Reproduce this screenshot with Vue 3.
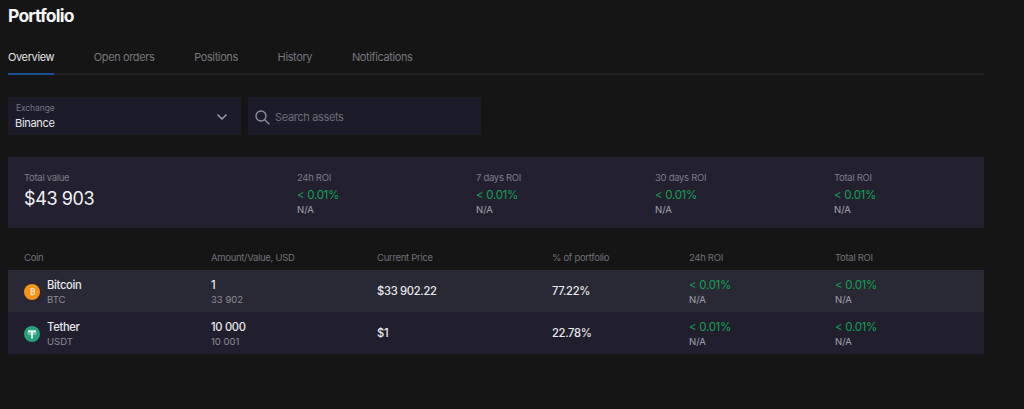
<template>
  <div class="page">
    <h1 class="title">Portfolio</h1>

    <nav class="tabs">
      <a
        v-for="tab in tabs"
        :key="tab"
        class="tab"
        :class="{ active: tab === 'Overview' }"
      >{{ tab }}</a>
    </nav>

    <div class="filters">
      <div class="select">
        <div>
          <div class="select-label">Exchange</div>
          <div class="select-value">Binance</div>
        </div>
        <svg width="12" height="8" viewBox="0 0 12 8" fill="none" stroke="#a3a3ab" stroke-width="1.4">
          <path d="M1.5 1.5 6 6l4.500-4.500" />
        </svg>
      </div>
      <div class="search">
        <svg width="15" height="15" viewBox="0 0 15 15" fill="none" stroke="#8e8e96" stroke-width="1.4">
          <circle cx="6" cy="6" r="5" />
          <path d="m9.700 9.700 4.600 4.600" />
        </svg>
        <span>Search assets</span>
      </div>
    </div>

    <section class="summary">
      <div>
        <div class="label">Total value</div>
        <div class="total">$43 903</div>
      </div>
      <div v-for="stat in stats" :key="stat" class="stat">
        <div class="label">{{ stat }}</div>
        <div class="roi">&lt; 0.01%</div>
        <div class="na">N/A</div>
      </div>
    </section>

    <div class="table-head table-grid">
      <span v-for="col in columns" :key="col">{{ col }}</span>
    </div>

    <div
      v-for="coin in coins"
      :key="coin.symbol"
      class="row table-grid"
      :class="coin.rowClass"
    >
      <div class="coin">
        <svg v-if="coin.symbol === 'BTC'" width="16" height="16" viewBox="0 0 16 16">
          <circle cx="8" cy="8" r="8" fill="#f7931a" />
          <path d="M6.300 4.600h2.400c1 0 1.600.5 1.600 1.400 0 .6-.3 1-.8 1.200.7.200 1.100.7 1.100 1.400 0 1-.7 1.700-1.800 1.700H6.300m.8-5.700v5.700m0-2.900h2.200" fill="none" stroke="#fde3c2" stroke-width="1.200" />
          <path d="M7.400 3.500v1.100m1.400-1.100v1.100m-1.400 5.700v1.100m1.400-1.100v1.100" stroke="#fde3c2" stroke-width=".8" />
        </svg>
        <svg v-else width="16" height="16" viewBox="0 0 16 16">
          <circle cx="8" cy="8" r="8" fill="#26a17b" />
          <path d="M4 4.300h8v1.600H8.900v6.600H7.100V5.900H4z" fill="#e6f4ef" />
          <ellipse cx="8" cy="7.300" rx="4.300" ry="1" fill="none" stroke="#e6f4ef" stroke-width=".7" />
        </svg>
        <div>
          <div class="primary">{{ coin.name }}</div>
          <div class="secondary">{{ coin.symbol }}</div>
        </div>
      </div>
      <div>
        <div class="primary">{{ coin.amount }}</div>
        <div class="secondary">{{ coin.value }}</div>
      </div>
      <div class="primary">{{ coin.price }}</div>
      <div class="primary">{{ coin.share }}</div>
      <div>
        <div class="roi">&lt; 0.01%</div>
        <div class="na">N/A</div>
      </div>
      <div>
        <div class="roi">&lt; 0.01%</div>
        <div class="na">N/A</div>
      </div>
    </div>
  </div>
</template>

<script setup>
const tabs = ['Overview', 'Open orders', 'Positions', 'History', 'Notifications']
const stats = ['24h ROI', '7 days ROI', '30 days ROI', 'Total ROI']
const columns = ['Coin', 'Amount/Value, USD', 'Current Price', '% of portfolio', '24h ROI', 'Total ROI']
const coins = [
  { name: 'Bitcoin', symbol: 'BTC', amount: '1', value: '33 902', price: '$33 902.22', share: '77.22%', rowClass: 'light' },
  { name: 'Tether', symbol: 'USDT', amount: '10 000', value: '10 001', price: '$1', share: '22.78%', rowClass: '' }
]
</script>

<style>
html, body {
  background: #151515;
}
</style>

<style scoped>
.page {
  width: 976px;
  height: 409px;
  padding-left: 8px;
  box-sizing: content-box;
  overflow: hidden;
  font-family: Inter, "Liberation Sans", sans-serif;
  color: #f2f2f4;
  font-size: 11px;
}
.title {
  margin: 0;
  padding-top: 5px;
  font-size: 17.500px;
  line-height: 22px;
  font-weight: 700;
  letter-spacing: -0.8px;
  color: #f5f5f5;
}
.tabs {
  display: flex;
  gap: 39.700px;
  margin-top: 18px;
  border-bottom: 2px solid #232325;
  height: 28px;
}
.tab {
  height: 28px;
  box-sizing: content-box;
  font-size: 11px;
  line-height: 24px;
  letter-spacing: -0.38px;
  color: #77777c;
}
.tab.active {
  color: #e4e4e6;
  border-bottom: 2px solid #1c4f8f;
}
.filters {
  display: flex;
  gap: 7px;
  margin-top: 22px;
}
.select, .search {
  width: 233px;
  height: 38px;
  padding-top: 2px;
  box-sizing: border-box;
  background: #1c1b29;
  display: flex;
  align-items: center;
}
.select {
  justify-content: space-between;
  padding-right: 13px;
  padding-left: 7px;
}
.select-label {
  font-size: 8.500px;
  line-height: 11px;
  letter-spacing: -0.1px;
  padding-left: 1px;
  color: #75757c;
}
.select-value {
  font-size: 11px;
  line-height: 15px;
  margin-top: 2px;
  letter-spacing: -0.3px;
  color: #e6e6e8;
}
.search {
  gap: 5px;
  padding-left: 7px;
  font-size: 11px;
  letter-spacing: -0.35px;
  color: #6d6d75;
}
.summary {
  display: grid;
  grid-template-columns: 273px 179px 179px 179px 1fr;
  margin-top: 22px;
  padding: 14px 16px 0;
  height: 71px;
  box-sizing: border-box;
  background: #232030;
}
.label {
  font-size: 9.500px;
  line-height: 13px;
  letter-spacing: -0.3px;
  color: #7d7d85;
}
.total {
  font-size: 18px;
  line-height: 24px;
  margin-top: 3px;
  letter-spacing: -0.4px;
  color: #f2f2f4;
}
.roi {
  font-size: 11.500px;
  line-height: 15px;
  letter-spacing: -0.3px;
  color: #12a150;
}
.stat .roi {
  margin-top: 4px;
}
.na {
  font-size: 9.500px;
  line-height: 13px;
  color: #a5a5ab;
}
.table-grid {
  display: grid;
  grid-template-columns: 187px 166px 175px 137px 146px 1fr;
  padding-left: 16px;
  align-items: center;
}
.table-head {
  margin-top: 21px;
  height: 21px;
  padding-bottom: 4px;
  box-sizing: border-box;
  font-size: 9.500px;
  letter-spacing: -0.3px;
  color: #717177;
}
.row {
  height: 42px;
  padding-top: 1px;
  box-sizing: border-box;
  background: #211f2e;
}
.row.light {
  background: #292835;
}
.coin {
  display: flex;
  align-items: center;
  gap: 7px;
}
.primary {
  font-size: 11.200px;
  line-height: 15px;
  font-weight: 500;
  letter-spacing: -0.3px;
  color: #e8e8ea;
}
.secondary {
  font-size: 9.500px;
  line-height: 13px;
  color: #8d8d93;
}
</style>
